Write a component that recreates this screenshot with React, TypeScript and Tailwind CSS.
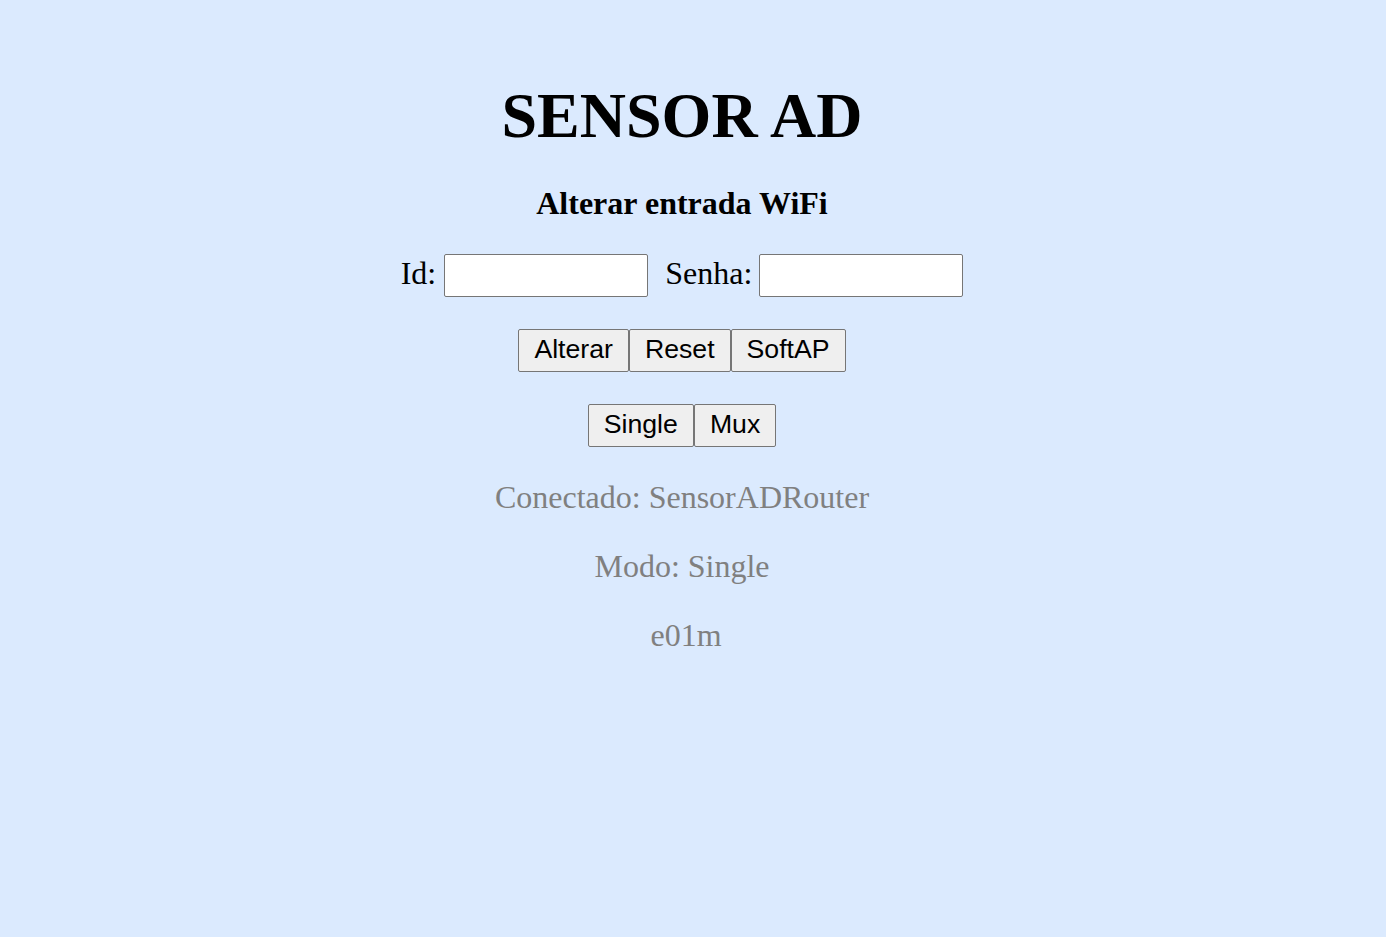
export default function App() {
  const serif = "font-['Liberation_Serif','Times_New_Roman',serif]";
  const btn =
    "font-['Liberation_Sans',Arial,sans-serif] text-[26.67px] leading-[31px] text-black bg-[#efefef] border border-[#767676] rounded-[2px] px-[15px] pt-[4px] pb-[6px]";

  return (
    <div className={`min-h-[937px] w-full bg-[#dbeafe] ${serif} text-black`}>
      <div className="flex flex-col items-center gap-8 pt-[80px] pr-[22px]">
        {/* Title */}
        <h1 className="text-[64px] leading-[74px] font-bold -mt-[1px]">SENSOR AD</h1>

        <h3 className="text-[32px] leading-[37px] font-bold">Alterar entrada WiFi</h3>

        {/* WiFi form */}
        <div className="flex items-center h-[43px] text-[32px] leading-[37px]">
          <label className="-mt-[5px]">Id:</label>
          <input
            type="text"
            className="ml-[8px] w-[204px] h-[43px] bg-white border border-[#767676] rounded-[2px]"
          />
          <label className="ml-[17px] -mt-[5px]">Senha:</label>
          <input
            type="password"
            className="ml-[7px] w-[204px] h-[43px] bg-white border border-[#767676] rounded-[2px]"
          />
        </div>

        <div className="flex">
          <button className={btn}>Alterar</button>
          <button className={btn}>Reset</button>
          <button className={btn}>SoftAP</button>
        </div>

        <div className="flex">
          <button className={btn}>Single</button>
          <button className={btn}>Mux</button>
        </div>

        {/* Status */}
        <p className="text-[32px] leading-[37px] text-[#808080]">Conectado: SensorADRouter</p>
        <p className="text-[32px] leading-[37px] text-[#808080]">Modo: Single</p>
        <p className="text-[32px] leading-[37px] text-[#808080] ml-[8px]">e01m</p>
      </div>
    </div>
  );
}
